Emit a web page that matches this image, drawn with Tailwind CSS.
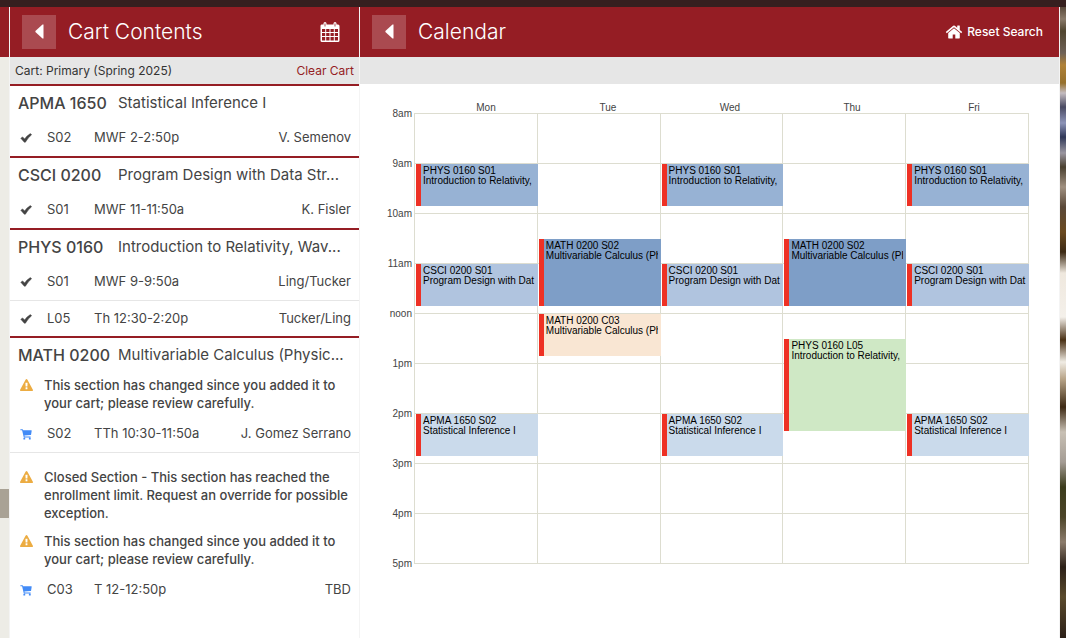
<!DOCTYPE html>
<html lang="en">
<head>
<meta charset="utf-8">
<meta name="viewport" content="width=device-width, initial-scale=1">
<title>Course Cart and Calendar</title>
<script src="https://cdn.jsdelivr.net/npm/@tailwindcss/browser@4"></script>
</head>
<body class="flex h-screen flex-col overflow-hidden bg-white font-['Inter','Liberation_Sans',sans-serif] text-[13px] text-[#444]">
<!-- Shared icons -->
<svg class="hidden" aria-hidden="true">
  <symbol id="check" viewBox="0 0 12 10"><path d="M.8 5.3 2.6 3.9 4.6 5.9Q7 2.6 10.4.6L11.6 1.8Q8 4.6 5.4 9.2H4.3Z" fill="currentColor" stroke="currentColor" stroke-width=".5" stroke-linejoin="round"/></symbol>
  <symbol id="warn" viewBox="0 0 1792 1792"><path fill="currentColor" d="M1024 1375v-190q0-14-9.5-23.5t-22.5-9.5h-192q-13 0-22.500 9.500t-9.500 23.500v190q0 14 9.500 23.500t22.500 9.500h192q13 0 22.500-9.500t9.500-23.500zm-2-374l18-459q0-12-10-19-13-11-24-11h-220q-11 0-24 11-10 7-10 21l17 457q0 10 10 16.500t24 6.500h185q14 0 23.500-6.500t10.500-16.500zm-14-934l768 1408q35 63-2 126-17 29-46.500 46t-63.500 17h-1536q-34 0-63.500-17t-46.500-46q-37-63-2-126l768-1408q17-31 47-49t65-18 65 18 47 49z"/></symbol>
  <symbol id="cart" viewBox="0 0 12 11"><path fill="currentColor" d="M.4.3H2.500Q2.900.3 3 .7L3.200 1.300H11.300Q11.800 1.300 11.700 1.800L11.100 5.500Q11 6 10.500 6L4.400 6.600 4.600 7.500H10.600V8.500H4.200Q3.800 8.500 3.700 8.100L2.100 1.300H.4ZM3.400 8.700H5.200V10.500H3.400ZM8.900 8.700H10.700V10.500H8.900Z"/></symbol>
</svg>

<div class="h-[7px] shrink-0 bg-[#361f1f]"></div>
<div class="flex min-h-0 flex-1">
  <!-- Edge of the search panel with its scrollbar -->
  <div class="flex w-[9px] shrink-0 flex-col bg-[#edece6]">
    <div class="h-[50px] bg-[#951d24]"></div>
    <div class="mt-[432px] h-[29px] bg-[#a9a295]"></div>
  </div>

  <section class="w-[351px] shrink-0 border-x border-[#f4f4f4] bg-white">
    <header class="flex h-[50px] items-center bg-[#951d24] pl-3 pr-[19px] text-white">
      <button aria-label="Back" class="grid size-[34px] place-items-center bg-[#aa4a50] pb-[2px]"><svg class="h-[15px] w-[9px]" viewBox="0 0 9 15"><path fill="currentColor" d="M8.500.6V14.400H7.500L.4 8V7L7.500.6Z"/></svg></button>
      <h1 class="ml-3 flex-1 text-[21px] font-light leading-7">Cart Contents</h1>
      <button aria-label="Show calendar"><svg class="size-5" viewBox="0 0 20 20"><path fill="currentColor" fill-rule="evenodd" d="M1.500 2.500H3.500V1.500Q3.500 0 5 0T6.500 1.500V2.500H13.500V1.500Q13.500 0 15 0T16.500 1.500V2.500H18Q19.500 2.500 19.500 4V18.500Q19.500 20 18 20H2Q.5 20 .5 18.500V4Q.5 2.500 1.500 2.500ZM2 7V10H5.200V7ZM6.200 7V10H9.500V7ZM10.500 7V10H13.800V7ZM14.800 7V10H18V7ZM2 11V14H5.200V11ZM6.200 11V14H9.500V11ZM10.500 11V14H13.800V11ZM14.800 11V14H18V11ZM2 15V18.500H5.200V15ZM6.200 15V18.500H9.500V15ZM10.500 15V18.500H13.800V15ZM14.800 15V18.500H18V15ZM4.600 1.500V4.500H5.400V1.500ZM14.600 1.500V4.500H15.400V1.500Z"/></svg></button>
    </header>
    <div class="flex h-[27px] items-center justify-between bg-[#e6e6e6] px-[5px] text-xs text-[#333]"><span>Cart: Primary (Spring 2025)</span><a href="#" class="text-[#951d24]">Clear Cart</a></div>

    <article class="border-t-2 border-[#951d24]">
      <h2 class="flex h-[34px] items-center whitespace-nowrap px-2 text-[15px] font-normal"><span class="w-[100px] shrink-0 text-base font-medium">APMA 1650</span>Statistical Inference I</h2>
      <div class="flex h-9 items-center pl-[10px] pr-2"><svg class="h-[10px] w-3"><use href="#check"/></svg><span class="ml-[15px] w-[47px]">S02</span><span class="flex-1">MWF 2-2:50p</span><span>V. Semenov</span></div>
    </article>
    <article class="border-t-2 border-[#951d24]">
      <h2 class="flex h-[34px] items-center whitespace-nowrap px-2 text-[15px] font-normal"><span class="w-[100px] shrink-0 text-base font-medium">CSCI 0200</span>Program Design with Data Str...</h2>
      <div class="flex h-9 items-center pl-[10px] pr-2"><svg class="h-[10px] w-3"><use href="#check"/></svg><span class="ml-[15px] w-[47px]">S01</span><span class="flex-1">MWF 11-11:50a</span><span>K. Fisler</span></div>
    </article>
    <article class="border-t-2 border-[#951d24]">
      <h2 class="flex h-[34px] items-center whitespace-nowrap px-2 text-[15px] font-normal"><span class="w-[100px] shrink-0 text-base font-medium">PHYS 0160</span>Introduction to Relativity, Wav...</h2>
      <div class="flex h-9 items-center pl-[10px] pr-2"><svg class="h-[10px] w-3"><use href="#check"/></svg><span class="ml-[15px] w-[47px]">S01</span><span class="flex-1">MWF 9-9:50a</span><span>Ling/Tucker</span></div>
      <div class="flex h-9 items-center border-t border-[#e6e6e6] pl-[10px] pr-2"><svg class="h-[10px] w-3"><use href="#check"/></svg><span class="ml-[15px] w-[47px]">L05</span><span class="flex-1">Th 12:30-2:20p</span><span>Tucker/Ling</span></div>
    </article>
    <article class="border-t-2 border-[#951d24]">
      <h2 class="flex h-[34px] items-center whitespace-nowrap px-2 text-[15px] font-normal"><span class="w-[100px] shrink-0 text-base font-medium">MATH 0200</span>Multivariable Calculus (Physic...</h2>
      <div class="flex flex-col gap-[10px] py-1 pl-[10px] font-medium leading-[18px]">
        <p class="flex gap-[11px]"><svg class="mt-[3px] size-[13px] shrink-0 text-[#ecac42]"><use href="#warn"/></svg><span>This section has changed since you added it to<br>your cart; please review carefully.</span></p>
      </div>
      <div class="flex h-9 items-center pl-[10px] pr-2"><svg class="h-[11px] w-3 text-[#428bf7]"><use href="#cart"/></svg><span class="ml-[15px] w-[47px]">S02</span><span class="flex-1">TTh 10:30-11:50a</span><span>J. Gomez Serrano</span></div>
      <div class="flex flex-col gap-[10px] border-t border-[#e6e6e6] pb-1 pl-[10px] pt-[15px] font-medium leading-[18px]">
        <p class="flex gap-[11px]"><svg class="mt-[3px] size-[13px] shrink-0 text-[#ecac42]"><use href="#warn"/></svg><span>Closed Section - This section has reached the<br>enrollment limit. Request an override for possible<br>exception.</span></p>
        <p class="flex gap-[11px]"><svg class="mt-[3px] size-[13px] shrink-0 text-[#ecac42]"><use href="#warn"/></svg><span>This section has changed since you added it to<br>your cart; please review carefully.</span></p>
      </div>
      <div class="flex h-9 items-center pl-[10px] pr-2"><svg class="h-[11px] w-3 text-[#428bf7]"><use href="#cart"/></svg><span class="ml-[15px] w-[47px]">C03</span><span class="flex-1">T 12-12:50p</span><span>TBD</span></div>
    </article>
  </section>

  <main class="min-w-0 flex-1 bg-white">
    <header class="flex h-[50px] items-center bg-[#951d24] pl-3 pr-4 text-white">
      <button aria-label="Back" class="grid size-[34px] place-items-center bg-[#aa4a50] pb-[2px]"><svg class="h-[15px] w-[9px]" viewBox="0 0 9 15"><path fill="currentColor" d="M8.500.6V14.400H7.500L.4 8V7L7.500.6Z"/></svg></button>
      <h1 class="ml-3 flex-1 text-[21px] font-light leading-7">Calendar</h1>
      <a href="#" class="flex items-center gap-1 text-xs font-medium"><svg class="size-[18px]" viewBox="0 0 1792 1792"><path fill="currentColor" d="M1472 992v480q0 26-19 45t-45 19h-384v-384h-256v384h-384q-26 0-45-19t-19-45v-480q0-1 .5-3t.5-3l575-474 575 474q1 2 1 6zm223-69l-62 74q-8 9-21 11h-3q-13 0-21-7l-692-577-692 577q-12 8-24 7-13-2-21-11l-62-74q-8-10-7-23.500t11-21.500l719-599q32-26 76-26t76 26l244 204v-195q0-14 9-23t23-9h192q14 0 23 9t9 23v408l219 182q10 8 11 21.500t-7 23.500z"/></svg>Reset Search</a>
    </header>
    <div class="h-[27px] bg-[#e6e6e6]"></div>

    <div class="pr-[30px] pt-[19px] font-['Liberation_Sans',sans-serif] text-[10px] leading-[10px] text-[#444]">
      <div class="-mr-[6px] grid grid-cols-5 pl-[65px] text-center">
        <div>Mon</div><div>Tue</div><div>Wed</div><div>Thu</div><div>Fri</div>
      </div>
      <div class="flex">
        <div class="-mt-[5px] w-[54px] shrink-0 pr-[2px] text-right">
          <div class="h-[50px] pt-[1px]">8am</div><div class="h-[50px] pt-[1px]">9am</div><div class="h-[50px] pt-[1px]">10am</div><div class="h-[50px] pt-[1px]">11am</div><div class="h-[50px] pt-[1px]">noon</div><div class="h-[50px] pt-[1px]">1pm</div><div class="h-[50px] pt-[1px]">2pm</div><div class="h-[50px] pt-[1px]">3pm</div><div class="h-[50px] pt-[1px]">4pm</div><div class="pt-[1px]">5pm</div>
        </div>
        <!-- Hour lines every 50px; events sit over them, offset by start time -->
        <div class="grid h-[451px] min-w-0 flex-1 grid-cols-5 border-r border-[#ddddd0] bg-[repeating-linear-gradient(to_bottom,#ddddd0_0,#ddddd0_1px,transparent_1px,transparent_50px)] text-black">
          <div class="relative border-l border-[#ddddd0]">
            <div class="absolute left-px -right-px top-[51px] z-10 h-[42px] overflow-hidden whitespace-nowrap border-l-[5px] border-[#ee3124] bg-[#97b2d4] pl-[2px] pt-[2px]">PHYS 0160 S01<br>Introduction to Relativity,</div>
            <div class="absolute left-px -right-px top-[151px] z-10 h-[42px] overflow-hidden whitespace-nowrap border-l-[5px] border-[#ee3124] bg-[#b0c4df] pl-[2px] pt-[2px]">CSCI 0200 S01<br>Program Design with Dat</div>
            <div class="absolute left-px -right-px top-[301px] z-10 h-[42px] overflow-hidden whitespace-nowrap border-l-[5px] border-[#ee3124] bg-[#cadaeb] pl-[2px] pt-[2px]">APMA 1650 S02<br>Statistical Inference I</div>
          </div>
          <div class="relative border-l border-[#ddddd0]">
            <div class="absolute left-px -right-px top-[126px] z-10 h-[67px] border-l-[5px] border-[#ee3124] bg-[#7e9ec7] pl-[2px] pr-[3px] pt-[2px]"><div class="overflow-hidden whitespace-nowrap">MATH 0200 S02<br>Multivariable Calculus (Ph</div></div>
            <div class="absolute left-px -right-px top-[201px] z-10 h-[42px] border-l-[5px] border-[#ee3124] bg-[#f9e6d3] pl-[2px] pr-[3px] pt-[2px]"><div class="overflow-hidden whitespace-nowrap">MATH 0200 C03<br>Multivariable Calculus (Ph</div></div>
          </div>
          <div class="relative border-l border-[#ddddd0]">
            <div class="absolute left-px -right-px top-[51px] z-10 h-[42px] overflow-hidden whitespace-nowrap border-l-[5px] border-[#ee3124] bg-[#97b2d4] pl-[2px] pt-[2px]">PHYS 0160 S01<br>Introduction to Relativity,</div>
            <div class="absolute left-px -right-px top-[151px] z-10 h-[42px] overflow-hidden whitespace-nowrap border-l-[5px] border-[#ee3124] bg-[#b0c4df] pl-[2px] pt-[2px]">CSCI 0200 S01<br>Program Design with Dat</div>
            <div class="absolute left-px -right-px top-[301px] z-10 h-[42px] overflow-hidden whitespace-nowrap border-l-[5px] border-[#ee3124] bg-[#cadaeb] pl-[2px] pt-[2px]">APMA 1650 S02<br>Statistical Inference I</div>
          </div>
          <div class="relative border-l border-[#ddddd0]">
            <div class="absolute left-px -right-px top-[126px] z-10 h-[67px] border-l-[5px] border-[#ee3124] bg-[#7e9ec7] pl-[2px] pr-[3px] pt-[2px]"><div class="overflow-hidden whitespace-nowrap">MATH 0200 S02<br>Multivariable Calculus (Ph</div></div>
            <div class="absolute left-px -right-px top-[226px] z-10 h-[92px] overflow-hidden whitespace-nowrap border-l-[5px] border-[#ee3124] bg-[#cfe8c5] pl-[2px] pt-[2px]">PHYS 0160 L05<br>Introduction to Relativity,</div>
          </div>
          <div class="relative border-l border-[#ddddd0]">
            <div class="absolute left-px -right-px top-[51px] z-10 h-[42px] overflow-hidden whitespace-nowrap border-l-[5px] border-[#ee3124] bg-[#97b2d4] pl-[2px] pt-[2px]">PHYS 0160 S01<br>Introduction to Relativity,</div>
            <div class="absolute left-px -right-px top-[151px] z-10 h-[42px] overflow-hidden whitespace-nowrap border-l-[5px] border-[#ee3124] bg-[#b0c4df] pl-[2px] pt-[2px]">CSCI 0200 S01<br>Program Design with Dat</div>
            <div class="absolute left-px -right-px top-[301px] z-10 h-[42px] overflow-hidden whitespace-nowrap border-l-[5px] border-[#ee3124] bg-[#cadaeb] pl-[2px] pt-[2px]">APMA 1650 S02<br>Statistical Inference I</div>
          </div>
        </div>
      </div>
    </div>
  </main>

  <!-- Sliver of the page's background photo -->
  <div class="w-[7px] shrink-0 border-l border-[#f4f4f4] bg-[linear-gradient(to_bottom,#5a4a3c_0px,#8a7a6a_12px,#50452f_24px,#6f6257_46px,#b08238_58px,#96702c_76px,#c4bcc0_86px,#4a4a62_100px,#8d94b8_116px,#303858_130px,#9a96a0_146px,#4a4030_160px,#a09080_180px,#5a4838_200px,#6b4a20_225px,#3c2a14_245px,#efe8de_266px,#f4f0ea_310px,#4a3014_333px,#f0ece4_355px,#b8a488_372px,#3e2a14_400px,#c8c0b4_425px,#a49c94_455px,#3c3c1c_480px,#4c4428_510px,#8c7c6c_535px,#2c2018_560px,#5a4a2c_590px,#2c2018_631px)]"></div>
</div>
</body>
</html>
